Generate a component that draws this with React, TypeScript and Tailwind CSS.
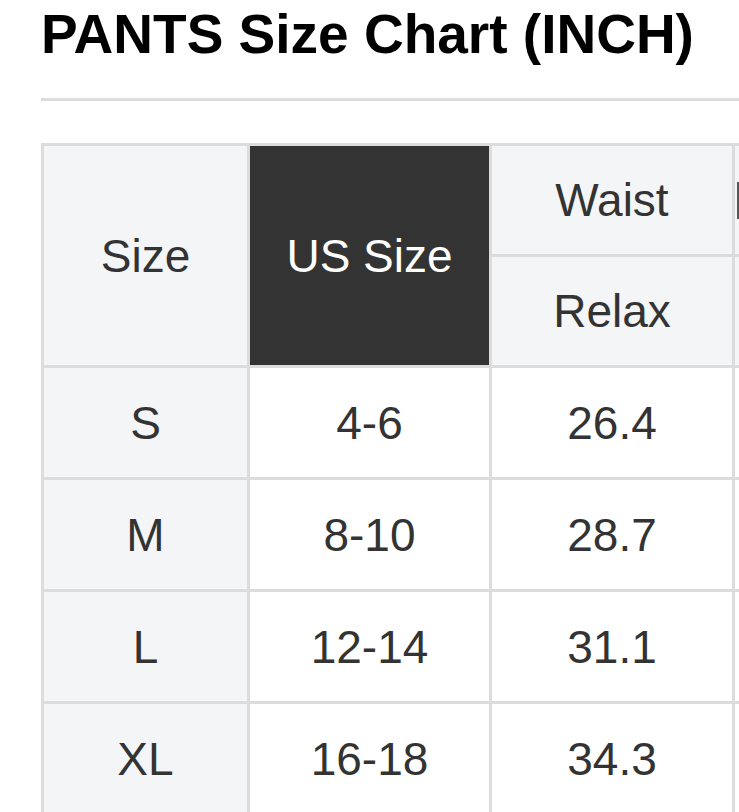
const rows = [
  { size: 'S', us: '4-6', waist: '26.4' },
  { size: 'M', us: '8-10', waist: '28.7' },
  { size: 'L', us: '12-14', waist: '31.1' },
  { size: 'XL', us: '16-18', waist: '34.3' },
];

export default function App() {
  return (
    <div className="h-[812px] w-[739px] overflow-hidden bg-white pl-[41px] pt-[7px] font-['Liberation_Sans',Arial,sans-serif] text-[#333333]">
      <h1 className="whitespace-nowrap text-[55px] font-bold leading-none text-black">PANTS Size Chart (INCH)</h1>

      <div className="mt-[36px] h-[3px] w-[720px] bg-[#dddddd]" />

      {/* Size table — grid gaps draw the cell borders */}
      <div className="mt-[42px] grid w-max grid-cols-[203px_239px_240px_240px] grid-rows-[108px_108px_109px_109px_109px_109px] gap-[3px] bg-[#dcdcdc] p-[3px] text-[46px] leading-none">
        <div className="row-span-2 flex items-center justify-center bg-[#f4f5f7]">Size</div>
        <div className="row-span-2 flex items-center justify-center bg-[#333333] text-white">US Size</div>
        <div className="flex items-center justify-center bg-[#f4f5f7]">Waist</div>
        {/* next column is cut off by the page edge; only its first stroke shows */}
        <div className="flex items-center bg-[#f4f5f7] pl-[2px]">
          <span className="h-[37px] w-[2px] bg-[#555555]" />
        </div>
        <div className="flex items-center justify-center bg-[#f4f5f7]">Relax</div>
        <div className="bg-[#f4f5f7]" />

        {rows.map((row) => (
          <div key={row.size} className="contents">
            <div className="flex items-center justify-center bg-[#f4f5f7]">{row.size}</div>
            <div className="flex items-center justify-center bg-white">{row.us}</div>
            <div className="flex items-center justify-center bg-white">{row.waist}</div>
            <div className="bg-white" />
          </div>
        ))}
      </div>
    </div>
  );
}
